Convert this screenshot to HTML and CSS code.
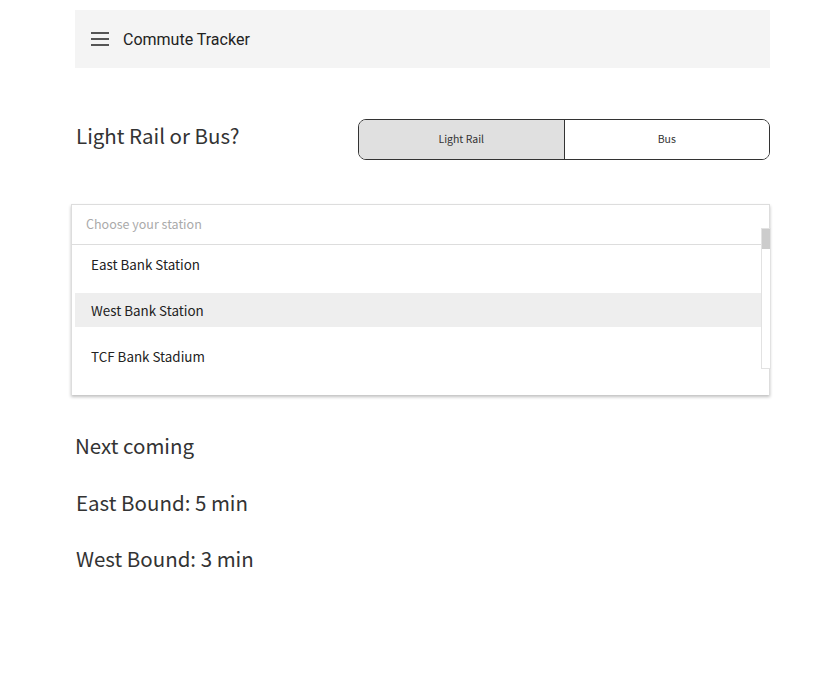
FILE: index.html
```html
<!DOCTYPE html>
<html>
<head>
<meta charset="utf-8">
<link rel="stylesheet" href="styles.css">
</head>
<body>
<div class="page">
  <header class="topbar">
    <svg class="menu" width="18" height="14" viewBox="0 0 18 14"><rect x="0" y="0" width="18" height="2" fill="#555"/><rect x="0" y="6" width="18" height="2" fill="#555"/><rect x="0" y="12" width="18" height="2" fill="#555"/></svg>
    <span class="title">Commute Tracker</span>
  </header>

  <section class="mode">
    <h2 class="mode-q">Light Rail or Bus?</h2>
    <div class="seg">
      <div class="seg-btn active">Light Rail</div>
      <div class="seg-btn">Bus</div>
    </div>
  </section>

  <section class="dropdown">
    <div class="dd-head">Choose your station</div>
    <ul class="dd-list">
      <li class="dd-item">East Bank Station</li>
      <li class="dd-item hover">West Bank Station</li>
      <li class="dd-item">TCF Bank Stadium</li>
    </ul>
    <div class="scroll"><div class="thumb"></div></div>
  </section>

  <h2 class="next">Next coming</h2>
  <p class="eta">East Bound: 5 min</p>
  <p class="eta">West Bound: 3 min</p>
</div>
</body>
</html>
```
FILE: styles.css
```css
html, body { margin: 0; padding: 0; background: #fff; }
body { font-family: "Noto Sans CJK SC", "Source Sans Pro", sans-serif; color: #333; }
.page { padding: 10px 53px 0 75px; }
.topbar {
  height: 58px; background: #f4f4f4; display: flex; align-items: center;
  padding-left: 16px;
}
.menu { display: block; margin-right: 14px; }
.title { font-family: Roboto, sans-serif; font-size: 16px; color: #222; }

.mode { display: flex; align-items: center; justify-content: space-between; margin-top: 51px; }
.mode-q { margin: 0 0 9px 1px; font-weight: 400; font-size: 20.5px; line-height: 28px; color: #333; }
.seg {
  width: 410px; height: 39px; border: 1px solid #333; border-radius: 8px;
  display: flex; overflow: hidden;
}
.seg-btn { flex: 1; display: flex; align-items: center; justify-content: center; font-size: 10.5px; color: #333; background: #fff; padding-bottom: 3px; }
.seg-btn.active { background: #e0e0e0; border-right: 1px solid #333; }

.dropdown {
  position: relative; margin: 44px 0 0 -4px; border: 1px solid #ddd; border-bottom: none;
  box-shadow: 0 2px 3px rgba(0,0,0,0.25); background: #fff; height: 190px;
}
.dd-head {
  height: 40px; border-bottom: 1px solid #ddd; display: flex; align-items: center;
  padding: 0 0 3px 14px; box-sizing: border-box; font-size: 12.5px; color: #aaa;
}
.dd-list { list-style: none; margin: 0; padding: 0 8px 0 3px; }
.dd-item {
  height: 34px; margin: 12px 0; display: flex; align-items: center; padding-left: 16px;
  font-size: 13.4px; color: #222;
}
.dd-item:first-child { margin-top: 2px; }
.dd-item.hover { background: #eee; }
.scroll {
  position: absolute; right: -2px; top: 23px; width: 8px; height: 139px;
  border: 1px solid #e2e2e2; background: #fff;
}
.thumb { height: 20px; background: #ccc; }

.next { margin: 36px 0 0 0; font-weight: 400; font-size: 20.5px; line-height: 28px; color: #333; }
.eta { margin: 29px 0 0 1px; font-size: 20.5px; line-height: 28px; color: #333; }
.eta + .eta { margin-top: 28px; }
```
